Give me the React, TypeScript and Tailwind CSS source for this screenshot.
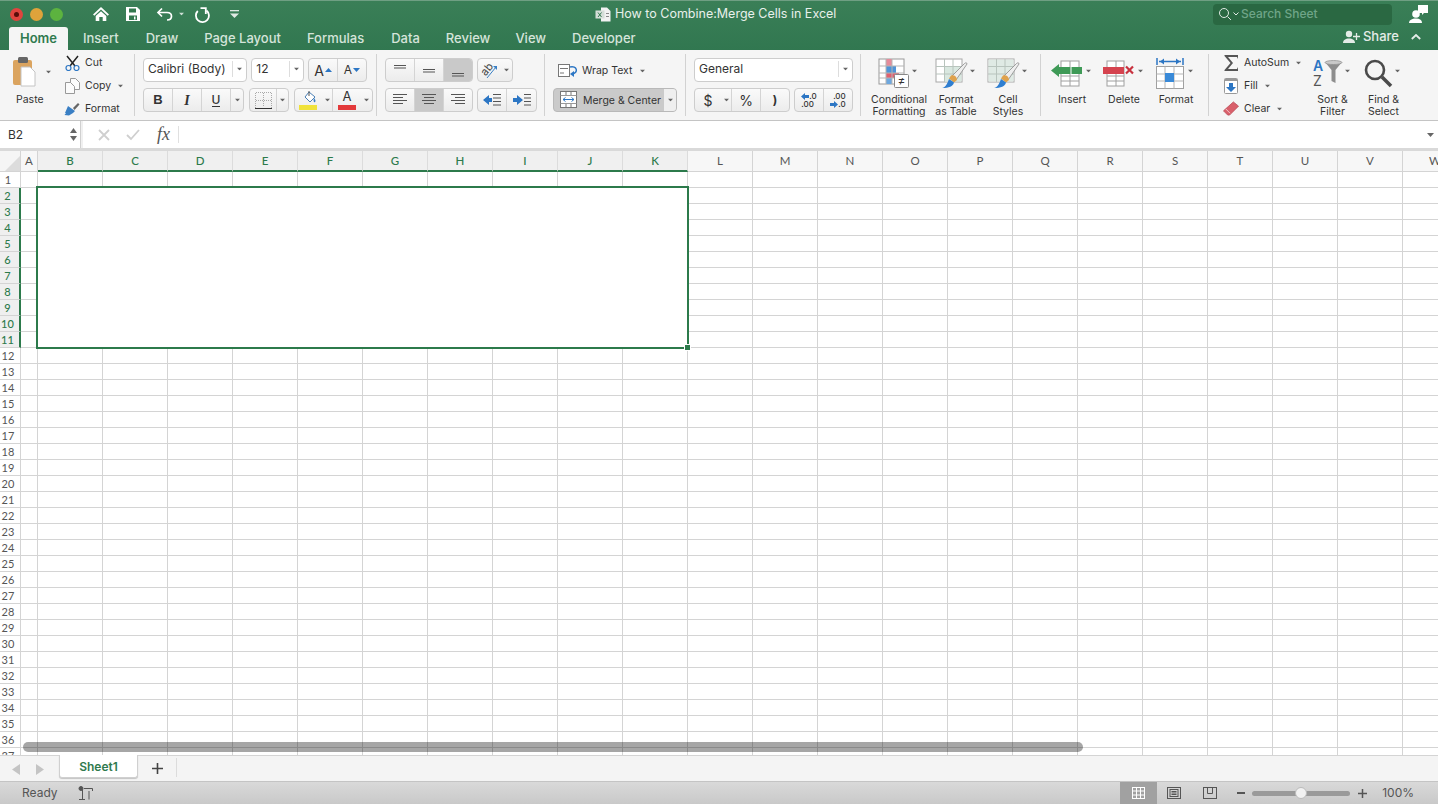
import type { ReactNode } from "react";

const COLUMNS = ["B", "C", "D", "E", "F", "G", "H", "I", "J", "K", "L", "M", "N", "O", "P", "Q", "R", "S", "T", "U", "V", "W"];
const SELECTED_COLUMNS = ["B", "C", "D", "E", "F", "G", "H", "I", "J", "K"];
const ROWS = Array.from({ length: 37 }, (_, i) => i + 1);

function Caret({ className = "" }: { className?: string }) {
  return (
    <svg width="7" height="4" viewBox="0 0 7 4" className={`shrink-0 ${className}`}>
      <path d="M0 0h7L3.5 4z" fill="#666" />
    </svg>
  );
}

function Seg({ width, children, active = false, border = true }: { width: number; children?: ReactNode; active?: boolean; border?: boolean }) {
  return (
    <div
      style={{ width }}
      className={`flex h-full shrink-0 items-center justify-center ${border ? "border-r border-[#d4d4d4] last:border-r-0" : ""} ${active ? "bg-[#c9c9c9]" : ""}`}
    >
      {children}
    </div>
  );
}

function Group({ children, className = "" }: { children: ReactNode; className?: string }) {
  return (
    <div className={`flex h-[24px] shrink-0 overflow-hidden rounded-[4px] border border-[#cdcdcd] bg-gradient-to-b from-[#fafafa] to-[#ececec] ${className}`}>
      {children}
    </div>
  );
}

function Sep() {
  return <div className="mt-[4px] h-[62px] w-px shrink-0 bg-[#d2d2d2]" />;
}

function AlignIcon({ lines, y = 0 }: { lines: [number, number][]; y?: number }) {
  return (
    <svg width="16" height="16" viewBox="0 0 16 16">
      {lines.map(([a, b], i) => (
        <rect key={i} x={a} y={2 + y + i * (lines.length > 2 ? 3 : 2.5)} width={b - a} height="1" fill="#555" />
      ))}
    </svg>
  );
}

function SmallRow({ icon, label, caret, ml = 5 }: { icon: ReactNode; label: string; caret?: boolean; ml?: number }) {
  return (
    <div className="flex h-[23px] items-center">
      <div className="flex w-[16px] justify-center">{icon}</div>
      <span style={{ marginLeft: ml }} className="text-[10.5px] text-[#333]">
        {label}
      </span>
      {caret && <Caret className="ml-[6px] scale-75" />}
    </div>
  );
}

function BigButton({ icon, lines, width, caretGap = 2 }: { icon: ReactNode; lines: string[]; width: number; caretGap?: number }) {
  return (
    <div style={{ width }} className="flex shrink-0 flex-col items-center">
      <div className="flex h-[37px] items-center">
        {icon}
        <Caret className="mt-[-4px] ml-[1px] scale-75" />
        <div style={{ width: caretGap }} />
      </div>
      <div className="mt-[3px] text-center text-[10.5px] leading-[12px] whitespace-nowrap text-[#333]">
        {lines.map((l) => (
          <div key={l}>{l}</div>
        ))}
      </div>
    </div>
  );
}

function BrushGrid({ fill }: { fill: ReactNode }) {
  return (
    <svg width="33" height="32" viewBox="0 0 33 32">
      <rect x="1" y="2" width="26" height="23" fill="#fff" stroke="#a8a8a8" />
      {fill}
      <path d="M9.500 2v23M18 2v23M1 9.500h26M1 17h26" stroke="#b8c4bd" strokeWidth="1" />
      <path d="M17 19 29.500 6.500c1-1 2.500-1 2.500 .5L21 23z" fill="#eeeeee" stroke="#8a8a8a" strokeWidth=".8" />
      <path d="M16 18.500c3-1 6 1 6 4.500l-3 2.500-5-4z" fill="#dfa24c" />
      <path d="M7 31c3-.5 5-3 7-9l5 3.500c-1 4-5 5.500-12 5.500z" fill="#2f7ed0" />
    </svg>
  );
}

function Header() {
  return (
    <div className="h-[50px] shrink-0 border-t border-[#6f9f83] bg-gradient-to-b from-[#3a7f57] to-[#317750]">
      <div className="flex h-[26px] items-center">
        <div className="ml-[10px] h-[13px] w-[13px] rounded-full bg-[#e0443e]">
          <div className="mx-auto mt-[4px] h-[5px] w-[5px] rounded-full bg-[#5a0d0a]" />
        </div>
        <div className="ml-[7px] h-[13px] w-[13px] rounded-full bg-[#dfa33b]" />
        <div className="ml-[7px] h-[13px] w-[13px] rounded-full bg-[#5cb33f]" />
        <svg width="18" height="16" viewBox="0 0 18 16" className="ml-[29px]">
          <path d="M9 1 1 8.500l1.300 1.200L9 3.600l6.700 6.100L17 8.500z" fill="#fff" />
          <path d="M3.700 10 9 5.200l5.300 4.800V15h-3.600v-4H7.300v4H3.700z" fill="#fff" />
        </svg>
        <svg width="16" height="16" viewBox="0 0 16 16" className="ml-[15px]">
          <path d="M1 1h11l3 3v11H1z" fill="#fff" />
          <rect x="4" y="2.500" width="7" height="4" fill="#33794f" />
          <rect x="4" y="9.500" width="8" height="4.500" fill="#33794f" />
          <rect x="9" y="10.500" width="1.500" height="3" fill="#fff" />
        </svg>
        <svg width="17" height="14" viewBox="0 0 17 14" className="ml-[15px]" fill="none" stroke="#fff" strokeWidth="1.700">
          <path d="M6 1.500 2 5.500l4 4" />
          <path d="M2.500 5.500H11c3 0 4.500 1.700 4.500 3.700S14 13 11 13" />
        </svg>
        <Caret className="ml-[5px] scale-75 [&>path]:fill-[#cfe0d6]" />
        <svg width="17" height="17" viewBox="0 0 17 17" className="ml-[9px]" fill="none" stroke="#fff" strokeWidth="1.800">
          <path d="M3.800 5a6.500 6.500 0 1 0 8.700 -.5" />
          <path d="M6.500 2.200h5.300V8" />
        </svg>
        <svg width="9" height="8" viewBox="0 0 9 8" className="ml-[19px]">
          <rect width="9" height="1.300" fill="#dfe9e3" />
          <path d="M0 3.500h9L4.500 8z" fill="#dfe9e3" />
        </svg>
        <svg width="16" height="15" viewBox="0 0 16 15" className="ml-[356px]">
          <path d="M6 .5h6l3.500 3.500V14.500H6z" fill="#f2f2f2" />
          <rect x=".5" y="3.500" width="9" height="8" fill="#d5ded8" />
          <rect x="11" y="6" width="3" height="1" fill="#888" />
          <rect x="11" y="9" width="3" height="1" fill="#888" />
          <path d="m3 5.500 3.500 4.500M6.500 5.500 3 10" stroke="#33794f" />
        </svg>
        <span className="ml-[4px] w-[225px] text-[12.5px] whitespace-nowrap text-[#e8f0eb]">How to Combine:Merge Cells in Excel</span>
        <div className="ml-[373px] flex h-[21px] w-[179px] shrink-0 items-center rounded-[4px] bg-[#2a6842]">
          <svg width="14" height="14" viewBox="0 0 14 14" className="ml-[5px]" fill="none" stroke="#dfe9e3" strokeWidth="1">
            <circle cx="6" cy="6" r="4.500" />
            <path d="m9.500 9.500 3.500 3.500" />
          </svg>
          <svg width="6" height="4" viewBox="0 0 6 4" className="ml-px" fill="none" stroke="#dfe9e3">
            <path d="m.5.500 2.500 2.500 2.500-2.500" />
          </svg>
          <span className="ml-[2px] text-[12px] font-medium whitespace-nowrap text-[#6fa588]">Search Sheet</span>
        </div>
        <svg width="20" height="20" viewBox="0 0 20 20" className="ml-[16px]">
          <path d="M10 1h10v8h-4l-2 2V9h-4z" fill="#fff" />
          <circle cx="8" cy="10" r="3.800" fill="#fff" />
          <path d="M1 19c0-3 3-4.500 7-4.500s6 1.500 6 4.500z" fill="#fff" />
        </svg>
      </div>
      <div className="flex h-[23px] items-end">
        <div className="ml-[9px] flex h-[23px] w-[59px] items-center justify-center rounded-t-[3px] bg-[#f5f5f5] text-[13px] font-semibold text-[#2f7a4e]">
          Home
        </div>
        {[
          ["Insert", 15],
          ["Draw", 27],
          ["Page Layout", 26],
          ["Formulas", 26],
          ["Data", 27],
          ["Review", 26],
          ["View", 25],
          ["Developer", 26],
        ].map(([label, ml]) => (
          <div key={label} style={{ marginLeft: ml as number }} className="flex h-[23px] items-center text-[13px] font-medium whitespace-nowrap text-[#d5e4da]">
            {label}
          </div>
        ))}
        <div className="ml-auto flex h-[26px] items-center pb-[1px]">
          <svg width="17" height="13" viewBox="0 0 17 13">
            <circle cx="6" cy="4" r="3.200" fill="#e4ece7" />
            <path d="M0 13c0-3 2.500-4.500 6-4.500s6 1.500 6 4.500z" fill="#e4ece7" />
            <path d="M13.500 3v7M10 6.500h7" stroke="#e4ece7" strokeWidth="1.300" />
          </svg>
          <span className="ml-[3px] text-[13px] font-medium text-[#e4ece7]">Share</span>
          <svg width="10" height="6" viewBox="0 0 10 6" className="mr-[17px] ml-[12px]" fill="none" stroke="#e4ece7" strokeWidth="1.800">
            <path d="m.8 5 4.200-4 4.200 4" />
          </svg>
        </div>
      </div>
    </div>
  );
}

function Ribbon() {
  return (
    <div className="flex h-[71px] shrink-0 border-b border-[#c4c4c4] bg-[#f5f5f5]">
      {/* paste */}
      <div className="ml-[13px] w-[40px] shrink-0 pt-[7px]">
        <div className="flex items-center">
          <svg width="24" height="30" viewBox="0 0 24 30">
            <rect x="0" y="3" width="19" height="25" rx="2" fill="#dba45f" />
            <rect x="5" y="0" width="10" height="6" rx="1.500" fill="#666" />
            <path d="M8 10h9l5 5v14H8z" fill="#fff" stroke="#c4c4c4" />
          </svg>
          <Caret className="ml-[8px] scale-75" />
        </div>
        <div className="mt-[5px] ml-[3px] text-[10.5px] text-[#333]">Paste</div>
      </div>
      <div className="ml-[11px] w-[70px] shrink-0 pt-[1px]">
        <SmallRow
          label="Cut"
          icon={
            <svg width="15" height="16" viewBox="0 0 15 16" fill="none">
              <path d="M2 1l8 10M13 1 5 11" stroke="#222" strokeWidth="1.500" />
              <circle cx="3.500" cy="13" r="2.500" stroke="#2c76c4" strokeWidth="1.200" />
              <circle cx="11.500" cy="13" r="2.500" stroke="#2c76c4" strokeWidth="1.200" />
            </svg>
          }
        />
        <SmallRow
          label="Copy"
          caret
          icon={
            <svg width="15" height="16" viewBox="0 0 15 16" fill="#fbfbfb" stroke="#999">
              <path d="M5.500 .5h5l4 4v7h-9z" />
              <path d="M.5 4.500h5l4 4v7h-9z" />
            </svg>
          }
        />
        <SmallRow
          label="Format"
          icon={
            <svg width="16" height="14" viewBox="0 0 16 14">
              <path d="M9 6 14 1l1.500 1.500L10.500 8z" fill="#666" />
              <path d="M4 4l7 5-2 2-4 2.500-4.500-.5 1.500-2-1 0z" fill="#3a7fc4" />
            </svg>
          }
        />
      </div>
      <Sep />
      {/* font */}
      <div className="ml-[8px] flex w-[224px] shrink-0 flex-col gap-[6px] pt-[8px]">
        <div className="flex h-[24px]">
          <div className="flex w-[105px] items-center rounded-[4px] border border-[#cdcdcd] bg-white pb-[2px] pl-[4px] text-[12px] text-[#333]">
            <span className="flex-1">Calibri (Body)</span>
            <div className="flex h-[16px] w-[14px] items-center justify-center border-l border-[#ddd]">
              <Caret className="scale-75" />
            </div>
          </div>
          <div className="ml-[4px] flex w-[53px] items-center rounded-[4px] border border-[#cdcdcd] bg-white pb-[2px] pl-[4px] text-[12px] text-[#333]">
            <span className="flex-1">12</span>
            <div className="flex h-[16px] w-[14px] items-center justify-center border-l border-[#ddd]">
              <Caret className="scale-75" />
            </div>
          </div>
          <Group className="ml-[4px]">
            <Seg width={29}>
              <span className="text-[14px] text-[#333]">A</span>
              <svg width="7" height="4" viewBox="0 0 7 4" className="ml-px">
                <path d="M0 4h7L3.500 0z" fill="#2c76c4" />
              </svg>
            </Seg>
            <Seg width={28}>
              <span className="text-[12px] text-[#333]">A</span>
              <svg width="7" height="4" viewBox="0 0 7 4" className="ml-px">
                <path d="M0 0h7L3.500 4z" fill="#2c76c4" />
              </svg>
            </Seg>
          </Group>
        </div>
        <div className="flex h-[24px]">
          <Group>
            <Seg width={29}>
              <span className="font-['Liberation_Sans',sans-serif] text-[13px] font-bold text-[#333]">B</span>
            </Seg>
            <Seg width={29}>
              <span className="font-['Liberation_Serif',serif] text-[14px] font-bold text-[#333] italic">I</span>
            </Seg>
            <Seg width={29}>
              <span className="border-b border-[#333] text-[12px] leading-[13px] font-medium text-[#333]">U</span>
            </Seg>
            <Seg width={12}>
              <Caret className="scale-75" />
            </Seg>
          </Group>
          <Group className="ml-[5px]">
            <Seg width={27}>
              <svg width="17" height="17" viewBox="0 0 17 17" fill="none">
                <path d="M.5 1v15M8.500 1v14M16.500 1v15M1 .5h15M1 8.500h15" stroke="#aaa" strokeDasharray="1 1" />
                <path d="M0 16.500h17" stroke="#333" />
              </svg>
            </Seg>
            <Seg width={11}>
              <Caret className="scale-75" />
            </Seg>
          </Group>
          <Group className="ml-[5px]">
            <Seg width={27} border={false}>
              <svg width="19" height="20" viewBox="0 0 19 20">
                <path d="M6 7l4-5 6 5-5 5z" fill="#fff" stroke="#4a7fb5" />
                <path d="M10 1v5" stroke="#555" />
                <path d="M15 8c1.500 2 2 3 1 4s-2-1-1-4z" fill="#3a7fc4" />
                <rect x="0" y="15" width="18" height="5" fill="#f0e23a" />
              </svg>
            </Seg>
            <Seg width={11}>
              <Caret className="scale-75" />
            </Seg>
            <Seg width={28} border={false}>
              <div className="flex flex-col items-center">
                <span className="text-[13px] leading-[13px] text-[#333]">A</span>
                <div className="mt-[2px] h-[5px] w-[18px] bg-[#e3393a]" />
              </div>
            </Seg>
            <Seg width={11}>
              <Caret className="scale-75" />
            </Seg>
          </Group>
        </div>
      </div>
      <div className="ml-[9px]">
        <Sep />
      </div>
      {/* alignment */}
      <div className="ml-[8px] flex w-[159px] shrink-0 flex-col gap-[6px] pt-[8px]">
        <div className="flex h-[24px]">
          <Group>
            <Seg width={29}>
              <AlignIcon lines={[[2, 14], [2, 14]]} y={1} />
            </Seg>
            <Seg width={29}>
              <AlignIcon lines={[[2, 14], [2, 14]]} y={5} />
            </Seg>
            <Seg width={28} active>
              <AlignIcon lines={[[2, 14], [2, 14]]} y={9} />
            </Seg>
          </Group>
          <Group className="ml-[4px]">
            <Seg width={34}>
              <svg width="22" height="20" viewBox="0 0 22 20" className="overflow-visible">
                <text x="1" y="13" fontSize="11" fill="#444" fontFamily="Inter, sans-serif" transform="rotate(-50 7 10)">ab</text>
                <path d="M7 18 16 7" stroke="#3a7fc4" />
                <path d="M13 6h4v4z" fill="#3a7fc4" />
              </svg>
              <Caret className="ml-[1px] scale-75" />
            </Seg>
          </Group>
        </div>
        <div className="flex h-[24px]">
          <Group>
            <Seg width={29}>
              <AlignIcon lines={[[1, 15], [1, 11], [1, 15], [1, 11]]} />
            </Seg>
            <Seg width={29} active>
              <AlignIcon lines={[[1, 15], [3, 13], [1, 15], [3, 13]]} />
            </Seg>
            <Seg width={28}>
              <AlignIcon lines={[[1, 15], [5, 15], [1, 15], [5, 15]]} />
            </Seg>
          </Group>
          <Group className="ml-[4px]">
            <Seg width={29}>
              <svg width="18" height="14" viewBox="0 0 18 14">
                <path d="M6 2 0 7l6 5V9h3V5H6z" fill="#2c76c4" />
                <path d="M10 1.500h8M10 5h8M10 8.500h8M10 12h8" stroke="#555" />
              </svg>
            </Seg>
            <Seg width={29}>
              <svg width="18" height="14" viewBox="0 0 18 14">
                <path d="M4 2l6 5-6 5V9H0V5h4z" fill="#2c76c4" />
                <path d="M11 1.500h7M11 5h7M11 8.500h7M11 12h7" stroke="#555" />
              </svg>
            </Seg>
          </Group>
        </div>
      </div>
      <Sep />
      {/* wrap and merge */}
      <div className="ml-[8px] flex w-[132px] shrink-0 flex-col gap-[6px] pt-[8px]">
        <div className="flex h-[24px] items-center pt-[1px] pl-[5px]">
          <svg width="21" height="14" viewBox="0 0 21 14" fill="none">
            <rect x=".5" y=".5" width="11" height="12" fill="#fff" stroke="#777" />
            <path d="M2 4.500h8M2 9h4" stroke="#777" />
            <path d="M12 3c7-2 9 6 2 7" stroke="#2c76c4" strokeWidth="1.500" />
            <path d="M16 7l-4 3 4 3z" fill="#2c76c4" />
          </svg>
          <span className="ml-[3px] text-[10.5px] text-[#333]">Wrap Text</span>
          <Caret className="ml-[7px] scale-75" />
        </div>
        <div className="flex h-[24px] w-[124px] overflow-hidden rounded-[4px] border border-[#b9b9b9] bg-[#cacaca]">
          <div className="flex w-[110px] items-center pl-[6px]">
            <svg width="18" height="18" viewBox="0 0 18 18" fill="none">
              <rect x=".5" y=".5" width="16" height="16" fill="#fff" stroke="#777" />
              <path d="M6 .5v4M11 .5v4M6 12.500v4M11 12.500v4" stroke="#777" />
              <path d="M.5 4.500h16M.5 12.500h16" stroke="#999" />
              <path d="M3 8.500h11M3 8.500l2.500-2M3 8.500l2.500 2M14 8.500l-2.500-2M14 8.500l-2.500 2" stroke="#2c76c4" />
            </svg>
            <span className="ml-[5px] pt-[2px] text-[10.5px] whitespace-nowrap text-[#333]">Merge &amp; Center</span>
          </div>
          <div className="flex flex-1 items-center justify-center bg-[#efefef]">
            <Caret className="scale-75" />
          </div>
        </div>
      </div>
      <Sep />
      {/* number */}
      <div className="ml-[8px] flex w-[166px] shrink-0 flex-col gap-[6px] pt-[8px]">
        <div className="flex h-[24px] w-[159px] items-center rounded-[4px] border border-[#cdcdcd] bg-white pb-[2px] pl-[4px] text-[12px] text-[#333]">
          <span className="flex-1">General</span>
          <div className="flex h-[16px] w-[14px] items-center justify-center border-l border-[#ddd]">
            <Caret className="scale-75" />
          </div>
        </div>
        <div className="flex h-[24px]">
          <Group>
            <Seg width={26} border={false}>
              <span className="text-[14px] text-[#333]">$</span>
            </Seg>
            <Seg width={11}>
              <Caret className="scale-75" />
            </Seg>
            <Seg width={29}>
              <span className="text-[14px] text-[#333]">%</span>
            </Seg>
            <Seg width={28}>
              <span className="text-[12px] leading-[12px] font-bold text-[#333]">{"\u0029"}</span>
            </Seg>
          </Group>
          <Group className="ml-[4px]">
            <Seg width={29}>
              <div className="flex flex-col text-[8px] leading-[8px] font-medium text-[#333]">
                <div className="flex items-center">
                  <svg width="8" height="7" viewBox="0 0 8 7"><path d="M4 0 0 3.500 4 7V5h4V2H4z" fill="#2c76c4" /></svg>
                  <span>.0</span>
                </div>
                <span>.00</span>
              </div>
            </Seg>
            <Seg width={28}>
              <div className="flex flex-col items-end text-[8px] leading-[8px] font-medium text-[#333]">
                <span>.00</span>
                <div className="flex items-center">
                  <svg width="8" height="7" viewBox="0 0 8 7"><path d="M4 0l4 3.500L4 7V5H0V2h4z" fill="#2c76c4" /></svg>
                  <span>.0</span>
                </div>
              </div>
            </Seg>
          </Group>
        </div>
      </div>
      <Sep />
      {/* styles */}
      <div className="ml-[6px] flex w-[173px] shrink-0 pt-[4px]">
        <BigButton
          width={64}
          lines={["Conditional", "Formatting"]}
          icon={
            <svg width="32" height="32" viewBox="0 0 32 32">
              <rect x="1" y="2" width="25" height="25" fill="#fff" stroke="#9a9a9a" />
              <rect x="8" y="2" width="6" height="7" fill="#e58c9b" />
              <rect x="8" y="9" width="10" height="7" fill="#4f94d8" />
              <rect x="8" y="16" width="13" height="5" fill="#e0606f" />
              <rect x="8" y="21" width="6" height="6" fill="#6ea8df" />
              <path d="M8 2v25M14 2v25M1 9h25M1 16h25M1 21h25" stroke="#b5b5b5" />
              <rect x="16.500" y="17.500" width="14" height="13" rx="1" fill="#fff" stroke="#888" />
              <text x="23.500" y="28" fontSize="12" textAnchor="middle" fill="#333">≠</text>
            </svg>
          }
        />
        <BigButton width={50} lines={["Format", "as Table"]} icon={<BrushGrid fill={<rect x="9.500" y="9.500" width="17" height="15" fill="#d9e8e0" />} />} />
        <BigButton width={54} lines={["Cell", "Styles"]} icon={<BrushGrid fill={<rect x="1.500" y="2.500" width="25" height="22" fill="#dfeae4" />} />} />
      </div>
      <Sep />
      {/* cells */}
      <div className="ml-[5px] flex w-[162px] shrink-0 pt-[4px]">
        <BigButton
          width={52}
          lines={["Insert"]}
          icon={
            <svg width="34" height="30" viewBox="0 0 34 30">
              <rect x="11" y="3" width="18" height="25" fill="#fff" stroke="#a0a0a0" />
              <path d="M20 3v25M11 18h18M11 23h18" stroke="#a0a0a0" />
              <rect x="11" y="9" width="21" height="7" fill="#3f9a57" />
              <path d="M21 9v7" stroke="#fff" />
              <path d="M9 6 1 12.500 9 19v-3h2V9H9z" fill="#3f9a57" />
            </svg>
          }
        />
        <BigButton
          width={52}
          lines={["Delete"]}
          icon={
            <svg width="34" height="30" viewBox="0 0 34 30">
              <rect x="5" y="3" width="17" height="25" fill="#fff" stroke="#a0a0a0" />
              <path d="M14 3v25M5 18h17M5 23h17" stroke="#a0a0a0" />
              <rect x="1" y="9" width="21" height="7" fill="#d5434f" />
              <path d="m24 8.500 7 7M31 8.500l-7 7" stroke="#c8323f" strokeWidth="2.200" />
            </svg>
          }
        />
        <BigButton
          width={52}
          lines={["Format"]}
          icon={
            <svg width="30" height="32" viewBox="0 0 30 32">
              <path d="M1 1v7M27 1v7M3 4.500h22" stroke="#2c76c4" strokeWidth="1.500" />
              <path d="M8 1.500 4 4.500l4 3zM20 1.500l4 3-4 3z" fill="#2c76c4" />
              <rect x=".5" y="9.500" width="27" height="22" fill="#fff" stroke="#a0a0a0" />
              <path d="M9 9.500v22M18 9.500v22M.5 17h27M.5 24h27" stroke="#b5b5b5" />
              <rect x="9" y="16" width="9" height="9" fill="#3a8ad8" />
            </svg>
          }
        />
      </div>
      <Sep />
      {/* editing */}
      <div className="ml-[14px] w-[84px] shrink-0 pt-[1px]">
        <SmallRow
          label="AutoSum"
          caret
          ml={5}
          icon={
            <svg width="15" height="16" viewBox="0 0 15 16">
              <path d="M.5 0H14v4l-1-2H4l5 6-5 6h9l1-2v4H.5v-1l6-7-6-7z" fill="#555" />
            </svg>
          }
        />
        <SmallRow
          label="Fill"
          caret
          ml={5}
          icon={
            <svg width="14" height="16" viewBox="0 0 14 16">
              <rect x=".5" y=".5" width="13" height="15" rx="1" fill="#fff" stroke="#999" />
              <rect x="1" y="1" width="12" height="2" fill="#999" />
              <path d="M5 5h4v4h3l-5 5-5-5h3z" fill="#2c76c4" />
            </svg>
          }
        />
        <SmallRow
          label="Clear"
          caret
          ml={5}
          icon={
            <svg width="17" height="15" viewBox="0 0 17 15">
              <path d="M11 .5 16.500 5 7 14.500H5L.5 10z" fill="#d9606b" stroke="#b94854" strokeWidth=".8" />
              <path d="M3 8l4.500 4.500" stroke="#f4c9cd" />
            </svg>
          }
        />
      </div>
      <div className="flex shrink-0 pt-[4px]">
        <BigButton
          width={51}
          lines={["Sort &", "Filter"]}
          icon={
            <svg width="30" height="30" viewBox="0 0 30 30">
              <text x="0" y="13" fontSize="14" fontWeight="600" fill="#2c76c4" fontFamily="Inter, sans-serif">A</text>
              <text x="0" y="28" fontSize="14" fill="#555" fontFamily="Inter, sans-serif">Z</text>
              <path d="M12 4h17l-6.500 8v13l-4-2V12z" fill="#8d8d8d" />
              <ellipse cx="20.500" cy="4.500" rx="8.500" ry="2" fill="#c9c9c9" stroke="#8d8d8d" strokeWidth=".7" />
            </svg>
          }
        />
        <BigButton
          width={51}
          lines={["Find &", "Select"]}
          icon={
            <svg width="29" height="30" viewBox="0 0 29 30" fill="none">
              <circle cx="11" cy="12" r="9" stroke="#4a4a4a" strokeWidth="2.600" />
              <path d="m18 19 9 9" stroke="#4a4a4a" strokeWidth="3.500" />
            </svg>
          }
        />
      </div>
    </div>
  );
}

function FormulaBar() {
  return (
    <div className="flex h-[30px] shrink-0 border-b-[3px] border-b-[#d9d9d9] bg-white">
      <div className="flex h-[27px] w-[81px] shrink-0 items-center border-r border-[#d0d0d0] pl-[8px] text-[12px] text-[#333]">
        <span className="flex-1">B2</span>
        <div className="mr-[3px] flex flex-col gap-[3px]">
          <svg width="7" height="5" viewBox="0 0 7 5"><path d="M0 5h7L3.500 0z" fill="#666" /></svg>
          <svg width="7" height="5" viewBox="0 0 7 5"><path d="M0 0h7L3.500 5z" fill="#666" /></svg>
        </div>
      </div>
      <div className="h-[27px] w-[2px] shrink-0 bg-[#f0f0f0]" />
      <svg width="12" height="12" viewBox="0 0 12 12" className="mt-[8px] ml-[15px]" stroke="#cfcfcf" strokeWidth="1.800">
        <path d="m1 1 10 10M11 1 1 11" />
      </svg>
      <svg width="14" height="12" viewBox="0 0 14 12" className="mt-[8px] ml-[16px]" fill="none" stroke="#cfcfcf" strokeWidth="1.800">
        <path d="m1 6 4 4 8-9" />
      </svg>
      <span className="mt-[3px] ml-[17px] w-[15px] font-['Liberation_Serif',serif] text-[18px] leading-[20px] text-[#555] italic">fx</span>
      <div className="mt-[5px] ml-[6px] h-[17px] w-px bg-[#e0e0e0]" />
      <div className="flex-1" />
      <Caret className="mt-[12px] mr-[4px]" />
    </div>
  );
}

function Sheet() {
  return (
    <div className="relative h-[604px] shrink-0 overflow-hidden bg-white font-['Lato',sans-serif] text-[11.5px]">
      <div className="flex h-[21px]">
        <div className="flex w-[21px] shrink-0 items-end justify-end border-r border-b border-[#d4d4d4] bg-[#f5f5f5]">
          <svg width="15" height="15" viewBox="0 0 15 15"><path d="M15 0v15H0z" fill="#dcdcdc" /></svg>
        </div>
        <div className="flex w-[17px] shrink-0 items-center justify-center border-r border-b border-[#d4d4d4] bg-[#f7f7f7] text-[#555]">A</div>
        {COLUMNS.map((c) => {
          const on = SELECTED_COLUMNS.includes(c);
          return (
            <div
              key={c}
              className={`flex w-[65px] shrink-0 items-center justify-center border-r ${
                on ? "border-b-2 border-r-[#dcdcdc] border-b-[#2c7a4b] bg-[#f0f0f0] font-medium text-[#2c7a4b]" : "border-b border-[#d4d4d4] bg-[#f7f7f7] text-[#555]"
              }`}
            >
              {c}
            </div>
          );
        })}
      </div>
      {ROWS.map((r) => {
        const on = r >= 2 && r <= 11;
        return (
          <div key={r} className="flex h-[16px]">
            <div
              className={`flex w-[21px] shrink-0 items-center justify-center border-b border-[#d4d4d4] pt-[1px] pr-[4px] text-[11px] ${
                on ? "border-r-2 border-r-[#2c7a4b] bg-[#efefef] font-medium text-[#2c7a4b]" : "border-r text-[#555]"
              }`}
            >
              {r}
            </div>
            <div className="w-[17px] shrink-0 border-r border-b border-[#d4d4d4]" />
            {COLUMNS.map((c) => (
              <div key={c} className="w-[65px] shrink-0 border-r border-b border-[#d4d4d4]" />
            ))}
          </div>
        );
      })}
      {/* merged selection */}
      <div className="absolute top-[35px] left-[36px] h-[163px] w-[653px] border-2 border-[#2c7a4b] bg-white" />
      <div className="absolute top-[193px] left-[684px] h-[7px] w-[7px] border border-white bg-[#2c7a4b]" />
      {/* horizontal scroll thumb */}
      <div className="absolute top-[591px] left-[23px] h-[10px] w-[1060px] rounded-full bg-black/35" />
    </div>
  );
}

function SheetTabs() {
  return (
    <div className="flex h-[26px] shrink-0 border-t border-[#d4d4d4] bg-[#f4f4f4]">
      <svg width="8" height="11" viewBox="0 0 8 11" className="mt-[8px] ml-[12px]"><path d="M8 0v11L0 5.500z" fill="#c4c4c4" /></svg>
      <svg width="8" height="11" viewBox="0 0 8 11" className="mt-[8px] ml-[16px]"><path d="M0 0v11l8-5.500z" fill="#c4c4c4" /></svg>
      <div className="-mt-px ml-[15px] flex h-[23px] w-[79px] items-center justify-center rounded-b-[3px] border-x border-b border-[#d0d0d0] bg-white pt-[2px] text-[12px] font-semibold text-[#2f7a4e] shadow-[0_1px_1px_rgba(0,0,0,.2)]">
        Sheet1
      </div>
      <svg width="11" height="11" viewBox="0 0 11 11" className="mt-[7px] ml-[14px]" stroke="#444" strokeWidth="1.600">
        <path d="M5.500 0v11M0 5.500h11" />
      </svg>
      <div className="mt-[2px] ml-[13px] h-[19px] w-px bg-[#dcdcdc]" />
    </div>
  );
}

function StatusBar() {
  return (
    <div className="flex h-[23px] shrink-0 items-center border-t border-[#c4c4c4] bg-gradient-to-b from-[#d9d9d9] to-[#c9c9c9] text-[12px] text-[#555]">
      <span className="ml-[22px]">Ready</span>
      <svg width="15" height="15" viewBox="0 0 15 15" className="ml-[20px]" fill="none" stroke="#555">
        <circle cx="3" cy="2.500" r="2" fill="#555" />
        <path d="M6 2.500h8.500V5M4.500 4v9M1 13.500h6M11 5v8.500" />
      </svg>
      <div className="ml-auto flex h-full items-center">
        <div className="flex h-full w-[37px] items-center justify-center bg-[#a1a1a1]">
          <svg width="13" height="12" viewBox="0 0 13 12" stroke="#fff" fill="none">
            <rect x=".5" y=".5" width="12" height="11" />
            <path d="M4.500 .5v11M8.500 .5v11M.5 4h12M.5 8h12" />
          </svg>
        </div>
        <svg width="14" height="12" viewBox="0 0 14 12" className="ml-[10px]" stroke="#555" fill="none">
          <rect x=".5" y=".5" width="13" height="11" />
          <rect x="3" y="2.500" width="8" height="7" />
          <path d="M4.500 4.500h5M4.500 6h5M4.500 7.500h5" />
        </svg>
        <svg width="14" height="12" viewBox="0 0 14 12" className="ml-[22px]" stroke="#555" fill="none">
          <rect x=".5" y=".5" width="13" height="11" />
          <path d="M4.500 .5v6h5v-6" />
        </svg>
        <div className="ml-[20px] h-[2px] w-[8px] bg-[#555]" />
        <div className="ml-[7px] flex h-[5px] w-[98px] items-center rounded-full bg-[#9a9a9a]">
          <div className="ml-[43px] h-[12px] w-[12px] shrink-0 rounded-full border border-[#bbb] bg-[#f2f2f2]" />
        </div>
        <svg width="9" height="9" viewBox="0 0 9 9" className="ml-[8px]" stroke="#555" strokeWidth="1.500">
          <path d="M4.500 0v9M0 4.500h9" />
        </svg>
        <span className="mr-[24px] ml-[15px]">100%</span>
      </div>
    </div>
  );
}

export default function App() {
  return (
    <div className="flex h-[804px] w-[1438px] flex-col overflow-hidden bg-white font-['Inter',sans-serif]">
      <Header />
      <Ribbon />
      <FormulaBar />
      <Sheet />
      <SheetTabs />
      <StatusBar />
    </div>
  );
}
